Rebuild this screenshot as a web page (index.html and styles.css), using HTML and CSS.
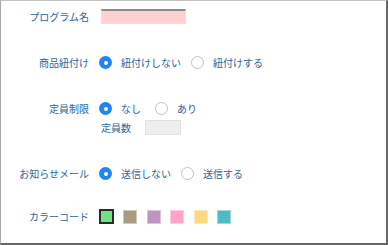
FILE: index.html
```html
<!DOCTYPE HTML>
<html>
<head>
	<meta charset="utf-8" />
	<title>プログラム設定</title>
	<link rel="stylesheet" href="styles.css">
</head>
<body>

<div id="frame">
<div class="form">

	<div class="label">プログラム名</div>
	<div class="control"><span class="text-input name-input"></span></div>

	<div class="label">商品紐付け</div>
	<div class="control">
		<span class="radio checked"></span><span class="option">紐付けしない</span>
		<span class="radio"></span><span class="option">紐付けする</span>
	</div>

	<div class="label">定員制限</div>
	<div class="control">
		<div class="line">
			<span class="radio checked"></span><span class="option wide">なし</span>
			<span class="radio"></span><span class="option">あり</span>
		</div>
		<div class="line sub">
			<span class="sub-label">定員数</span><span class="text-input count-input"></span>
		</div>
	</div>

	<div class="label">お知らせメール</div>
	<div class="control">
		<span class="radio checked"></span><span class="option">送信しない</span>
		<span class="radio"></span><span class="option">送信する</span>
	</div>

	<div class="label color-row">カラーコード</div>
	<div class="control color-row">
		<span class="swatch selected" style="background:#6ee47e"></span>
		<span class="swatch" style="background:#a99c82"></span>
		<span class="swatch" style="background:#c093c3"></span>
		<span class="swatch" style="background:#ffa3c9"></span>
		<span class="swatch" style="background:#ffd97f"></span>
		<span class="swatch" style="background:#4fbac3"></span>
	</div>

</div>
</div>

</body>
</html>
```

FILE: styles.css
```css
	html, body {margin: 0; padding: 0; background: #fff;}

	body {font-family: "Noto Sans CJK JP", "Noto Sans", sans-serif; font-size: 10px; color: #2f6496;}

	#frame {
	box-sizing: border-box;
	width: 388px;
	height: 245px;
	border-top: 1px solid #c4c4c4;
	border-left: 1px solid #a8a8a8;
	border-right: 2px solid #666;
	border-bottom: 2px solid #666;
	padding-top: 8px;
	}

	.form {
	display: grid;
	grid-template-columns: 88px 1fr;
	column-gap: 10px;
	row-gap: 31px;
	align-items: start;
	}

	.label {
	text-align: right;
	line-height: 15px;
	height: 15px;
	}

	.control {
	display: flex;
	flex-direction: row;
	align-items: center;
	min-height: 15px;
	line-height: 15px;
	}

	.control .line {display: flex; align-items: center; height: 15px;}

	.control:has(.line) {flex-direction: column; align-items: flex-start;}

	.line.sub {margin-top: 4px;}

	.color-row {margin-top: -3px;}

	.text-input {
	display: inline-block;
	box-sizing: border-box;
	height: 15px;
	border: 1px solid #e2e2e2;
	border-top: 2px solid #8a8a8a;
	}

	.name-input {width: 85px; margin-left: 2px; background: #ffd0d0;}

	.count-input {width: 36px; background: #eeeeee; border-top: 1px solid #e0e0e0;}

	.sub-label {margin-left: 2px; margin-right: 14px;}

	.radio {
	display: inline-block;
	box-sizing: border-box;
	width: 13px;
	height: 13px;
	border-radius: 50%;
	border: 1px solid #c2c2c2;
	background: #fff;
	position: relative;
	}

	.radio.checked {border: none; background: #1e86ee;}

	.radio.checked::after {
	content: "";
	position: absolute;
	left: 4.5px;
	top: 4.5px;
	width: 4px;
	height: 4px;
	border-radius: 50%;
	background: #fff;
	}

	.option {margin-left: 9px; margin-right: 10px; white-space: nowrap;}

	.option.wide {margin-right: 14px;}

	.swatch {
	display: inline-block;
	box-sizing: border-box;
	width: 14px;
	height: 14px;
	margin-right: 9.5px;
	border: 1px solid rgba(255,255,255,0.45);
	}

	.swatch.selected {border: 2px solid #2b2b2b; width: 15px; height: 15px; margin-right: 9px;}
```
